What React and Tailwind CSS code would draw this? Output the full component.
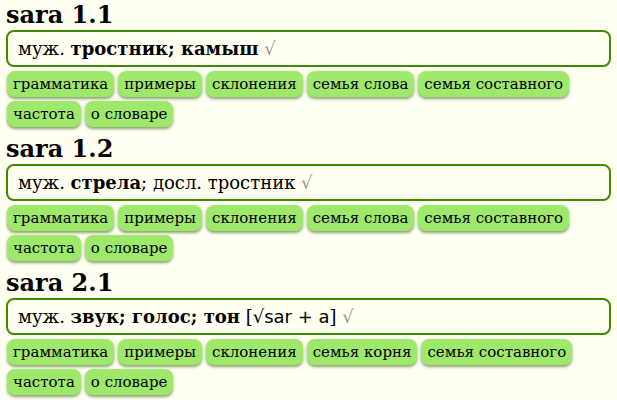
import React from "react";

const entries = [
  {
    title: "sara 1.1",
    body: (
      <>
        муж. <b>тростник; камыш</b> <span className="text-[#999]">√</span>
      </>
    ),
    family: "семья слова",
  },
  {
    title: "sara 1.2",
    body: (
      <>
        муж. <b>стрела</b>; досл. тростник <span className="text-[#999]">√</span>
      </>
    ),
    family: "семья слова",
  },
  {
    title: "sara 2.1",
    body: (
      <>
        муж. <b>звук; голос; тон</b> [
        <span className="font-['DejaVu_Sans',sans-serif]">√sar + a</span>]{" "}
        <span className="text-[#999]">√</span>
      </>
    ),
    family: "семья корня",
  },
];

function Btn({ children }) {
  return (
    <span className="rounded-[8px] bg-[#9ee86c] px-[6px] py-[3px] text-[15px] leading-[20px] text-black shadow-[0_2px_3px_rgba(40,90,0,0.55)]">
      {children}
    </span>
  );
}

function Entry({ e }) {
  return (
    <div>
      <h2 className="text-[24px] font-bold leading-[30px]">{e.title}</h2>
      <div className="rounded-[8px] border-2 border-[#3f8a00] px-[10px] py-[5px] text-[18px] leading-[23px]">
        {e.body}
      </div>
      <div className="mt-[4px] flex flex-wrap gap-x-[4px] gap-y-[4px] pl-px">
        {["грамматика", "примеры", "склонения", e.family, "семья составного", "частота", "о словаре"].map((b) => (
          <Btn key={b}>{b}</Btn>
        ))}
      </div>
    </div>
  );
}

export default function App() {
  return (
    <div className="min-h-[400px] bg-[#fffff2] px-[6px] font-['DejaVu_Serif',serif] text-black">
      <div className="flex flex-col gap-[7px]">
        {entries.map((e) => (
          <Entry key={e.title} e={e} />
        ))}
      </div>
    </div>
  );
}
